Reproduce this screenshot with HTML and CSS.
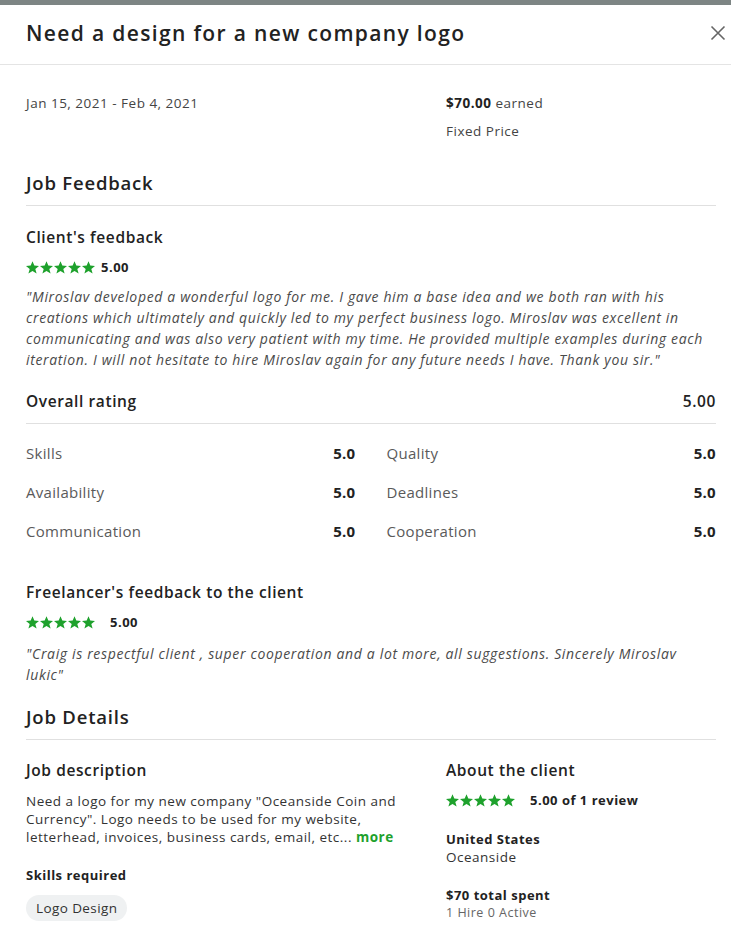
FILE: index.html
```html
<!DOCTYPE html>
<html lang="en">
<head>
    <meta charset="UTF-8">
    <meta name="viewport" content="width=device-width, initial-scale=1.0">
    <title>Need a design for a new company logo</title>
    <link rel="stylesheet" href="styles.css">
</head>
<body>

    <!-- shared star shape -->
    <svg width="0" height="0" style="position:absolute">
        <symbol id="star" viewBox="0 0 13 13">
            <path d="M6.5 0.2 L8.3 4.6 L13 4.9 L9.3 7.9 L10.6 12.6 L6.5 10 L2.4 12.6 L3.7 7.9 L0 4.9 L4.7 4.6 Z"/>
        </symbol>
    </svg>

    <div class="backdrop"></div>

    <div class="modal">
        <!-- Header -->
        <div class="modal-header">
            <h1>Need a design for a new company logo</h1>
            <button class="close-btn" aria-label="Close">
                <svg width="16" height="16" viewBox="0 0 16 16"><path d="M1.5 1.5 L14.5 14.5 M14.5 1.5 L1.5 14.5" stroke="#666" stroke-width="1.6" fill="none"/></svg>
            </button>
        </div>

        <div class="modal-body">
            <div class="two-col">
                <div class="muted-text">Jan 15, 2021 - Feb 4, 2021</div>
                <div>
                    <div class="muted-text"><strong>$70.00</strong> earned</div>
                    <div class="muted-text fixed">Fixed Price</div>
                </div>
            </div>

            <!-- Feedback -->
            <h2 class="section-title">Job Feedback</h2>

            <h3 class="sub-title">Client's feedback</h3>
            <div class="rating">
                <svg class="stars" width="69" height="13" viewBox="0 0 69 13">
                    <use href="#star" x="0" width="13" height="13"/>
                    <use href="#star" x="14" width="13" height="13"/>
                    <use href="#star" x="28" width="13" height="13"/>
                    <use href="#star" x="42" width="13" height="13"/>
                    <use href="#star" x="56" width="13" height="13"/>
                </svg>
                <span class="score">5.00</span>
            </div>
            <p class="quote">"Miroslav developed a wonderful logo for me. I gave him a base idea and we both ran with his creations which ultimately and quickly led to my perfect business logo. Miroslav was excellent in communicating and was also very patient with my time. He provided multiple examples during each iteration. I will not hesitate to hire Miroslav again for any future needs I have. Thank you sir."</p>

            <div class="overall">
                <span>Overall rating</span>
                <span>5.00</span>
            </div>

            <div class="scores">
                <div class="score-row"><span>Skills</span><b>5.0</b></div>
                <div class="score-row"><span>Quality</span><b>5.0</b></div>
                <div class="score-row"><span>Availability</span><b>5.0</b></div>
                <div class="score-row"><span>Deadlines</span><b>5.0</b></div>
                <div class="score-row"><span>Communication</span><b>5.0</b></div>
                <div class="score-row"><span>Cooperation</span><b>5.0</b></div>
            </div>

            <h3 class="sub-title">Freelancer's feedback to the client</h3>
            <div class="rating">
                <svg class="stars" width="69" height="13" viewBox="0 0 69 13">
                    <use href="#star" x="0" width="13" height="13"/>
                    <use href="#star" x="14" width="13" height="13"/>
                    <use href="#star" x="28" width="13" height="13"/>
                    <use href="#star" x="42" width="13" height="13"/>
                    <use href="#star" x="56" width="13" height="13"/>
                </svg>
                <span class="score wide">5.00</span>
            </div>
            <p class="quote spaced">"Craig is respectful client , super cooperation and a lot more, all suggestions. Sincerely Miroslav lukic"</p>

            <!-- Details -->
            <h2 class="section-title tight">Job Details</h2>

            <div class="two-col details">
                <div>
                    <h3 class="sub-title">Job description</h3>
                    <p class="desc">Need a logo for my new company "Oceanside Coin and Currency". Logo needs to be used for my website, letterhead, invoices, business cards, email, etc... <a href="#" class="more">more</a></p>
                    <div class="small-title">Skills required</div>
                    <span class="pill">Logo Design</span>
                </div>
                <div>
                    <h3 class="sub-title">About the client</h3>
                    <div class="rating">
                        <svg class="stars" width="69" height="13" viewBox="0 0 69 13">
                            <use href="#star" x="0" width="13" height="13"/>
                            <use href="#star" x="14" width="13" height="13"/>
                            <use href="#star" x="28" width="13" height="13"/>
                            <use href="#star" x="42" width="13" height="13"/>
                            <use href="#star" x="56" width="13" height="13"/>
                        </svg>
                        <span class="score wide">5.00 of 1 review</span>
                    </div>
                    <div class="client-info">
                        <div class="small-title">United States</div>
                        <div class="desc">Oceanside</div>
                    </div>
                    <div class="client-info">
                        <div class="small-title">$70 total spent</div>
                        <div class="tiny">1 Hire 0 Active</div>
                    </div>
                </div>
            </div>
        </div>
    </div>

</body>
</html>
```

FILE: styles.css
```css
body {
    margin: 0;
    background: white;
    font-family: "Open Sans", Arial, sans-serif;
    color: #222;
}
.backdrop {
    height: 5px;
    background: #7d8584;
}
.modal-header {
    display: flex;
    align-items: center;
    justify-content: space-between;
    height: 56px;
    padding: 0 5px 3px 26px;
    border-bottom: 1px solid #e4e4e4;
}
.modal-header h1 {
    margin: 0;
    font-size: 21px;
    font-weight: 600;
    letter-spacing: 1.35px;
    color: #222;
}
.close-btn {
    border: none;
    background: none;
    padding: 0;
    cursor: pointer;
    display: flex;
}
.modal-body {
    padding: 29px 15px 0 26px;
}
.two-col {
    display: grid;
    grid-template-columns: 394px 1fr;
    column-gap: 26px;
}
.muted-text {
    font-size: 13.5px;
    letter-spacing: 0.5px;
    color: #444;
    line-height: 18px;
}
.muted-text strong {
    font-weight: 700;
    color: #222;
}
.fixed {
    margin-top: 10px;
}
.section-title {
    margin: 31px 0 0;
    padding-bottom: 10px;
    border-bottom: 1px solid #e0e0e0;
    font-size: 18.5px;
    font-weight: 600;
    letter-spacing: 0.8px;
    line-height: 24px;
}
.section-title.tight {
    margin-top: 20px;
}
.sub-title {
    margin: 20px 0 0;
    font-size: 15.5px;
    font-weight: 600;
    letter-spacing: 0.6px;
    line-height: 22px;
}
.details .sub-title {
    margin-top: 19px;
}
.rating {
    display: flex;
    align-items: center;
    gap: 6px;
    margin-top: 9px;
    height: 20px;
}
.stars {
    fill: #1ea12c;
}
.score {
    font-size: 13px;
    font-weight: 700;
    letter-spacing: 0.5px;
    color: #222;
}
.score.wide {
    margin-left: 9px;
}
.quote {
    margin: 9px 0 0;
    font-size: 14px;
    font-style: italic;
    letter-spacing: 0.65px;
    line-height: 21px;
    color: #4a4a4a;
}
.quote.spaced {
    margin-top: 11px;
}
.overall {
    display: flex;
    justify-content: space-between;
    margin-top: 20px;
    padding-bottom: 11px;
    border-bottom: 1px solid #e0e0e0;
    font-size: 15.5px;
    font-weight: 600;
    letter-spacing: 0.6px;
    line-height: 22px;
}
.scores {
    display: grid;
    grid-template-columns: 1fr 1fr;
    column-gap: 31px;
    row-gap: 17px;
    margin-top: 18px;
    margin-bottom: 39px;
}
.score-row {
    display: flex;
    justify-content: space-between;
    font-size: 15px;
    letter-spacing: 0.3px;
    line-height: 22px;
    color: #5a5a5a;
}
.score-row b {
    font-weight: 700;
    color: #222;
}
.desc {
    margin: 11px 0 0;
    font-size: 13.5px;
    letter-spacing: 0.5px;
    line-height: 18px;
    color: #333;
}
.more {
    color: #1ea12c;
    font-weight: 700;
    text-decoration: none;
}
.small-title {
    margin-top: 20px;
    font-size: 13px;
    font-weight: 700;
    letter-spacing: 0.5px;
    line-height: 18px;
}
.pill {
    display: inline-block;
    margin-top: 11px;
    padding: 4px 10px;
    border-radius: 14px;
    background: #eff1f2;
    font-size: 13.5px;
    letter-spacing: 0.4px;
    line-height: 18px;
    color: #333;
}
.client-info .small-title {
    margin-top: 20px;
}
.client-info .desc {
    margin-top: 0;
}
.tiny {
    font-size: 12.5px;
    letter-spacing: 0.5px;
    line-height: 18px;
    color: #666;
}
```
